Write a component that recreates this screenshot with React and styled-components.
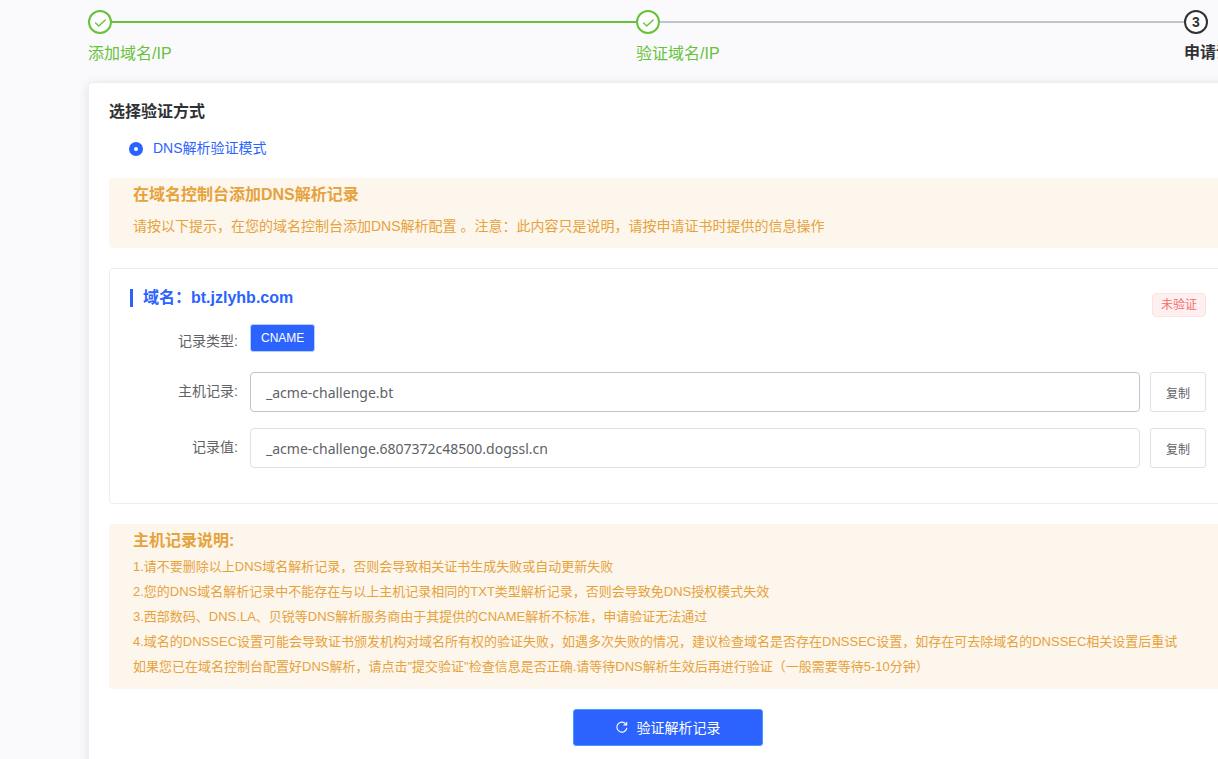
import React from "react";
import styled, { createGlobalStyle } from "styled-components";

const GlobalStyle = createGlobalStyle`
  *, *::before, *::after { box-sizing: border-box; }
  body {
    margin: 0;
    background: #fafafc;
    color: #303133;
    font-family: "Liberation Sans", "Noto Sans CJK SC", sans-serif;
    font-size: 14px;
  }
  h2, h3, p, ol, ul { margin: 0; padding: 0; }
  button, input { font-family: inherit; }
`;

const colors = {
  primary: "#2c63ff",
  success: "#67c23a",
  warning: "#e6a23c",
  text: "#606266",
};

const Page = styled.div`
  overflow-x: clip;
`;

/* The content column runs a little past the right edge of the window. */
const Content = styled.main`
  margin: 0 -30px 0 88px;
  padding-top: 10px;
`;

const Steps = styled.ol`
  display: flex;
  list-style: none;
`;

const stepColor = ({ $status }) =>
  $status === "done" ? colors.success : "#303133";

const Step = styled.li`
  flex: ${(p) => (p.$last ? "none" : "1")};
  color: ${stepColor};
`;

const StepHead = styled.div`
  display: flex;
  align-items: center;
`;

const StepCircle = styled.span`
  display: flex;
  align-items: center;
  justify-content: center;
  width: 24px;
  height: 24px;
  border: 2px solid currentColor;
  border-radius: 50%;
  background: #fff;
  font-size: 14px;
  font-weight: 700;
  line-height: 20px;
`;

const StepLine = styled.span`
  flex: 1;
  height: 2px;
  background: ${(p) => (p.$done ? colors.success : "#c0c4cc")};
`;

const StepTitle = styled.div`
  height: 38px;
  font-size: 16px;
  font-weight: ${(p) => (p.$status === "done" ? 400 : 700)};
  line-height: ${(p) => (p.$status === "done" ? 40 : 38)}px;
  white-space: nowrap;
`;

const Card = styled.section`
  margin-top: 10px;
  padding: 20px;
  border: 1px solid #ebeef5;
  border-radius: 4px;
  background: #fff;
  box-shadow: 0 2px 12px rgba(0, 0, 0, 0.1);
`;

const CardTitle = styled.h2`
  font-size: 16px;
  line-height: 18px;
`;

const RadioLabel = styled.label`
  display: flex;
  align-items: center;
  gap: 10px;
  margin: 18px 20px 19px;
  color: ${colors.primary};
  line-height: 20px;
`;

const Radio = styled.input`
  appearance: none;
  width: 14px;
  height: 14px;
  margin: 0;
  border: 5px solid ${colors.primary};
  border-radius: 50%;
  background: #fff;
`;

const RadioText = styled.span`
  height: 20px;
  line-height: 18px;
`;

const Notice = styled.div`
  padding: 8px 24px 10px;
  border-radius: 4px;
  background: #fdf6ec;
  color: ${colors.warning};
`;

const NoticeTitle = styled.h3`
  font-size: 16px;
  line-height: 18px;
`;

const NoticeText = styled.p`
  padding-top: 10px;
  line-height: 24px;
`;

const NoticeList = styled.div`
  padding-top: 4px;
  font-size: 13px;
  line-height: 25px;
`;

const Panel = styled.section`
  margin: 20px 0;
  padding: 20px 20px 35px;
  border: 1px solid #ebeef5;
  border-radius: 4px;
`;

const PanelHead = styled.div`
  display: flex;
  align-items: flex-start;
  justify-content: space-between;
  height: 33px;
`;

const Domain = styled.h3`
  padding-left: 10px;
  border-left: 3px solid ${colors.primary};
  color: ${colors.primary};
  font-size: 16px;
  line-height: 18px;
`;

const Tag = styled.span`
  margin-top: 4px;
  padding: 0 8px;
  border: 1px solid #fde2e2;
  border-radius: 4px;
  background: #fef0f0;
  color: #f56c6c;
  font-size: 12px;
  line-height: 22px;
`;

const Field = styled.div`
  display: flex;
  align-items: flex-start;
  height: 40px;
  margin-top: ${(p) => p.$gap}px;
`;

const FieldLabel = styled.label`
  width: 120px;
  padding-right: 12px;
  color: ${colors.text};
  line-height: 38px;
  text-align: right;
`;

const TypeButton = styled.button`
  height: 28px;
  margin-top: 2px;
  padding: 0 10px;
  border: 1px solid #b3d0ff;
  border-radius: 3px;
  background: ${colors.primary};
  color: #fff;
  font-size: 12px;
`;

const TextInput = styled.input`
  flex: 1;
  min-width: 0;
  height: 40px;
  padding: 0 15px;
  border: 1px solid ${(p) => (p.$active ? "#c0c4cc" : "#dcdfe6")};
  border-radius: 4px;
  color: ${colors.text};
  font-family: "Noto Sans", "Noto Sans CJK SC", sans-serif;
  font-size: 14px;
`;

const CopyButton = styled.button`
  width: 56px;
  height: 40px;
  margin-left: 10px;
  padding: 0;
  border: 1px solid #dcdfe6;
  border-radius: 3px;
  background: #fff;
  color: ${colors.text};
  font-size: 12px;
`;

const SubmitButton = styled.button`
  display: flex;
  align-items: center;
  justify-content: center;
  gap: 9px;
  width: 190px;
  height: 37px;
  margin: 20px auto 0;
  padding: 0 0 2px;
  border: 1px solid #409eff;
  border-radius: 3px;
  background: ${colors.primary};
  color: #fff;
  font-size: 14px;
`;

const CheckIcon = () => (
  <svg width="14" height="14" viewBox="0 0 14 14" fill="none" stroke="currentColor" strokeWidth="1.4" strokeLinecap="round" strokeLinejoin="round" aria-hidden="true">
    <path d="M2.6 8 L5.8 11 L12.2 5" />
  </svg>
);

const RefreshIcon = () => (
  <svg width="12" height="12" viewBox="0 0 12 12" fill="none" stroke="currentColor" strokeWidth="1.1" strokeLinecap="round" strokeLinejoin="round" aria-hidden="true">
    <path d="M10.8 7.2 A5 5 0 1 1 10.3 3.7" />
    <path d="M10.7 1.2 V3.9 H8" />
  </svg>
);

const steps = [
  { title: "添加域名/IP", status: "done", lineDone: true },
  { title: "验证域名/IP", status: "done", lineDone: false },
  { title: "申请证书", status: "current" },
];

const records = [
  { id: "host", label: "主机记录:", value: "_acme-challenge.bt", active: true, gap: 10 },
  { id: "value", label: "记录值:", value: "_acme-challenge.6807372c48500.dogssl.cn", active: false, gap: 16 },
];

const notes = [
  "1.请不要删除以上DNS域名解析记录，否则会导致相关证书生成失败或自动更新失败",
  "2.您的DNS域名解析记录中不能存在与以上主机记录相同的TXT类型解析记录，否则会导致免DNS授权模式失效",
  "3.西部数码、DNS.LA、贝锐等DNS解析服务商由于其提供的CNAME解析不标准，申请验证无法通过",
  "4.域名的DNSSEC设置可能会导致证书颁发机构对域名所有权的验证失败，如遇多次失败的情况，建议检查域名是否存在DNSSEC设置，如存在可去除域名的DNSSEC相关设置后重试",
  "如果您已在域名控制台配置好DNS解析，请点击\"提交验证\"检查信息是否正确.请等待DNS解析生效后再进行验证（一般需要等待5-10分钟）",
];

export default function App() {
  return (
    <Page lang="zh-CN">
      <GlobalStyle />
      <Content>
        <Steps>
          {steps.map((step, i) => {
            const last = i === steps.length - 1;
            return (
              <Step key={step.title} $status={step.status} $last={last}>
                <StepHead>
                  <StepCircle>{step.status === "done" ? <CheckIcon /> : i + 1}</StepCircle>
                  {!last && <StepLine $done={step.lineDone} />}
                </StepHead>
                <StepTitle $status={step.status}>{step.title}</StepTitle>
              </Step>
            );
          })}
        </Steps>

        <Card>
          <CardTitle>选择验证方式</CardTitle>
          <RadioLabel>
            <Radio type="radio" name="mode" defaultChecked />
            <RadioText>DNS解析验证模式</RadioText>
          </RadioLabel>

          <Notice>
            <NoticeTitle>在域名控制台添加DNS解析记录</NoticeTitle>
            <NoticeText>
              请按以下提示，在您的域名控制台添加DNS解析配置 。注意：此内容只是说明，请按申请证书时提供的信息操作
            </NoticeText>
          </Notice>

          <Panel>
            <PanelHead>
              <Domain>域名：bt.jzlyhb.com</Domain>
              <Tag>未验证</Tag>
            </PanelHead>
            <Field $gap={0}>
              <FieldLabel htmlFor="record-type">记录类型:</FieldLabel>
              <TypeButton id="record-type" type="button">CNAME</TypeButton>
            </Field>
            {records.map((r) => (
              <Field key={r.id} $gap={r.gap}>
                <FieldLabel htmlFor={r.id}>{r.label}</FieldLabel>
                <TextInput id={r.id} type="text" readOnly value={r.value} $active={r.active} />
                <CopyButton type="button">复制</CopyButton>
              </Field>
            ))}
          </Panel>

          <Notice>
            <NoticeTitle>主机记录说明:</NoticeTitle>
            <NoticeList>
              {notes.map((n) => (
                <p key={n}>{n}</p>
              ))}
            </NoticeList>
          </Notice>

          <SubmitButton type="button">
            <RefreshIcon />
            验证解析记录
          </SubmitButton>
        </Card>
      </Content>
    </Page>
  );
}
